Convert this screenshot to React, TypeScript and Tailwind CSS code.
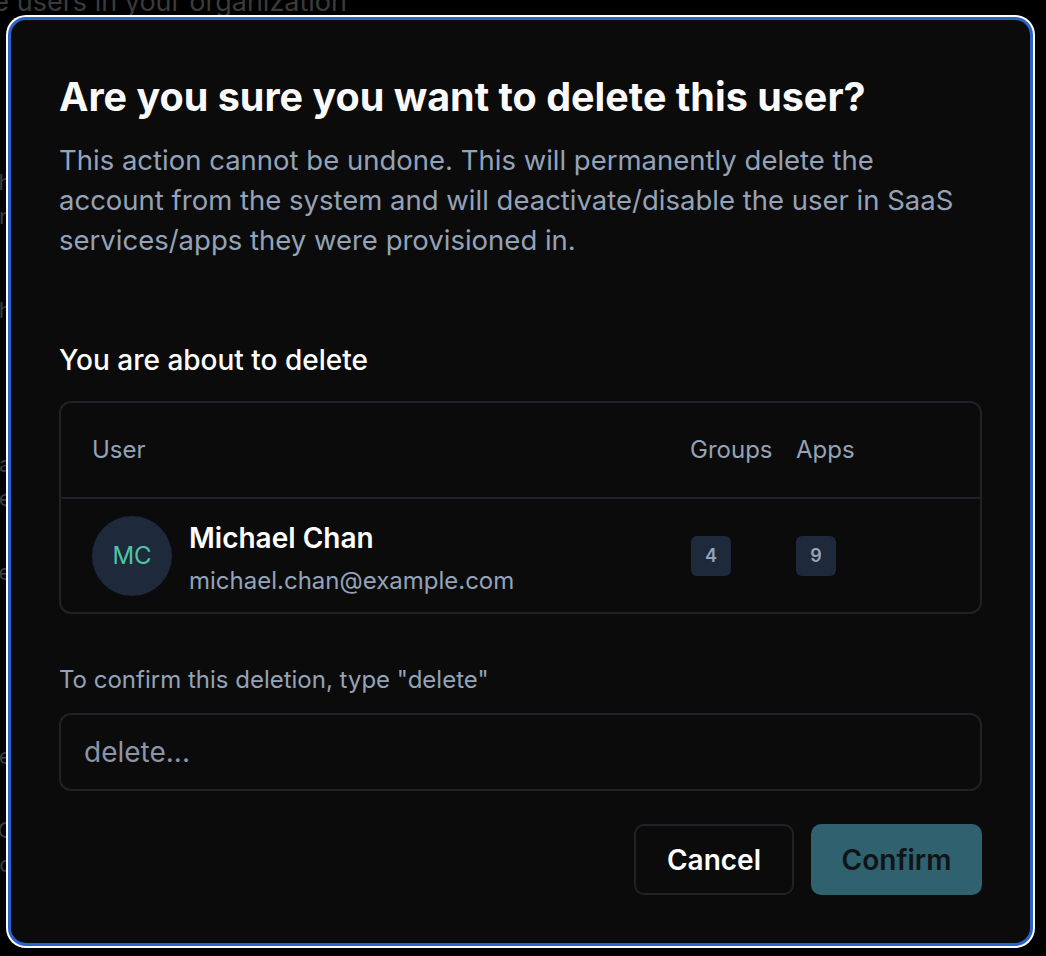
const user = {
  initials: 'MC',
  name: 'Michael Chan',
  email: 'michael.chan@example.com',
  groups: 4,
  apps: 9,
};

export default function App() {
  return (
    <div className="relative h-[956px] w-full overflow-hidden bg-black font-['Inter',sans-serif]">
      {/* page behind the dialog */}
      <div className="text-[#3b3b3b]">
        <div className="-mt-[14px] flex w-[347px] justify-end whitespace-nowrap text-[27px] leading-[32px]">
          <span>Manage users in your organization</span>
        </div>
        <div className="ml-[-14px] mt-[150px] flex flex-col gap-[6px] text-[22px] leading-[28px]">
          <span>ch</span>
          <span>nn</span>
          <span className="mt-[60px]">eh</span>
          <span className="mt-[120px]">ea</span>
          <span>ee</span>
          <span className="mt-[40px]">ae</span>
          <span className="mt-[150px]">ee</span>
          <span className="mt-[40px]">sG</span>
          <span>oo</span>
        </div>
      </div>

      {/* dialog */}
      <div className="absolute left-[8px] top-[17px] w-[1025px] rounded-[18px] border-[3px] border-[#2c62cc] bg-[#0b0b0b] px-[48px] pb-[48px] pt-[53px] shadow-[0_0_0_2px_#ffffff]">
        <h1 className="text-[39.5px] font-bold leading-[48px] text-[#fafafa]">
          Are you sure you want to delete this user?
        </h1>
        <p className="mt-[19px] max-w-[905px] text-[27.5px] leading-[40px] text-[#94a3b8]">
          This action cannot be undone. This will permanently delete the account from the system and will deactivate/disable the user in SaaS services/apps they were provisioned in.
        </p>

        <h2 className="mt-[82px] text-[28px] font-medium leading-[36px] text-white">You are about to delete</h2>

        <div className="mt-[23px] rounded-[12px] border-2 border-[#222226]">
          <div className="grid h-[94px] grid-cols-[598px_106px_1fr] items-center pl-[31px] text-[24px] text-[#94a3b8]">
            <span>User</span>
            <span>Groups</span>
            <span>Apps</span>
          </div>
          <div className="grid h-[115px] grid-cols-[598px_106px_1fr] items-center border-t-2 border-[#222226] pl-[31px]">
            <div className="flex items-center gap-[17px]">
              <div className="flex h-[80px] w-[80px] items-center justify-center rounded-full bg-[#1e293b] text-[24px] text-[#4fc5a6]">
                {user.initials}
              </div>
              <div className="flex flex-col pt-[6px]">
                <span className="text-[28px] font-semibold leading-[34px] text-white">{user.name}</span>
                <span className="mt-[11px] text-[24px] leading-[30px] text-[#94a3b8]">{user.email}</span>
              </div>
            </div>
            <div>
              <span className="ml-[1px] flex h-[40px] w-[40px] items-center justify-center rounded-[6px] bg-[#1e293b] text-[18px] font-semibold text-[#94a3b8]">{user.groups}</span>
            </div>
            <div>
              <span className="flex h-[40px] w-[40px] items-center justify-center rounded-[6px] bg-[#1e293b] text-[18px] font-semibold text-[#94a3b8]">{user.apps}</span>
            </div>
          </div>
        </div>

        <label className="mt-[50px] block text-[24px] leading-[32px] text-[#94a3b8]">To confirm this deletion, type "delete"</label>
        <input
          type="text"
          placeholder="delete..."
          className="mt-[17px] h-[78px] w-full rounded-[12px] border-2 border-[#222226] bg-transparent px-[23px] text-[28px] text-white outline-none placeholder:text-[#8b95a7]"
        />

        <div className="mt-[33px] flex justify-end gap-[17px]">
          <button className="h-[71px] w-[160px] rounded-[10px] border-2 border-[#222226] text-[28px] font-semibold text-white">Cancel</button>
          <button className="h-[71px] w-[171px] rounded-[10px] bg-[#2f616e] text-[28px] font-semibold text-[#111417]">Confirm</button>
        </div>
      </div>
    </div>
  );
}
